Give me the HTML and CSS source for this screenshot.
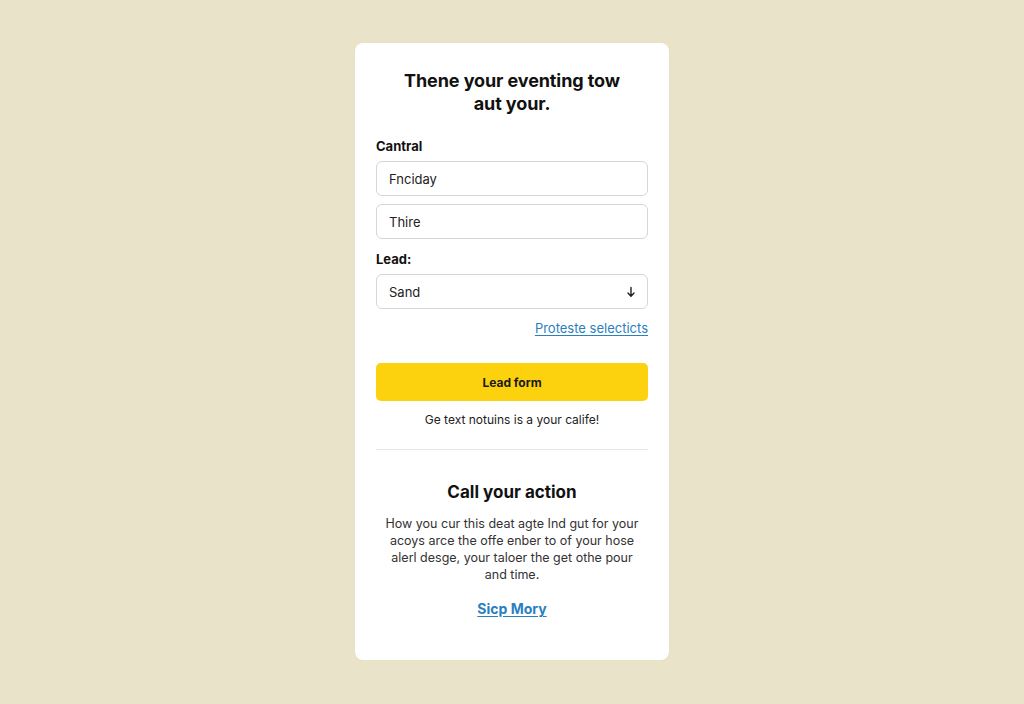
FILE: index.html
```html
<!DOCTYPE html>
<html>
<head>
<meta charset="utf-8">
<link rel="stylesheet" href="styles.css">
</head>
<body>
<main class="card">
  <h1 class="title">Thene your eventing tow aut your.</h1>
  <div class="label first">Cantral</div>
  <div class="field">Fnciday</div>
  <div class="field">Thire</div>
  <div class="label">Lead:</div>
  <div class="field select"><span>Sand</span>
    <svg class="arrow" width="10" height="12" viewBox="0 0 10 12"><path d="M5 1.5V10M2 7l3 3.2L8 7" fill="none" stroke="#222" stroke-width="1.4" stroke-linecap="round" stroke-linejoin="round"/></svg>
  </div>
  <div class="link-row"><a class="link" href="#">Proteste selecticts</a></div>
  <button class="btn">Lead form</button>
  <p class="note">Ge text notuins is a your calife!</p>
  <hr class="divider">
  <h2 class="subtitle">Call your action</h2>
  <p class="para">How you cur this deat agte Ind gut for your acoys arce the offe enber to of your hose alerl desge, your taloer the get othe pour and time.</p>
  <div class="more-row"><a class="more" href="#">Sicp Mory</a></div>
</main>
</body>
</html>
```
FILE: styles.css
```css
html, body { margin: 0; padding: 0; }
body {
  background: #e9e3c9;
  font-family: Inter, "Open Sans", "Liberation Sans", sans-serif;
  color: #111;
  width: 1024px;
  height: 704px;
  display: flex;
  justify-content: center;
  align-items: flex-start;
}
.card {
  margin-top: 43px;
  width: 314px;
  box-sizing: border-box;
  height: 617px;
  background: #ffffff;
  border-radius: 8px;
  padding: 26px 21px 0 21px;
  display: flex;
  flex-direction: column;
  box-shadow: 0 0 2px rgba(0,0,0,0.04);
}
.title {
  margin: 0 auto;
  max-width: 240px;
  font-size: 18px;
  line-height: 23px;
  font-weight: 700;
  text-align: center;
  letter-spacing: -0.1px;
  color: #111;
}
.label {
  font-size: 13px;
  font-weight: 700;
  line-height: 16px;
  margin-top: 4px;
  margin-bottom: 7px;
}
.label.first { margin-top: 23px; }
.field {
  height: 35px;
  box-sizing: border-box;
  border: 1px solid #d6d6d6;
  border-radius: 6px;
  padding: 0 12px;
  display: flex;
  align-items: center;
  font-size: 13px;
  color: #222;
  margin-bottom: 8px;
}
.field.select { justify-content: space-between; padding-right: 11px; margin-bottom: 0; }
.link-row { display: flex; justify-content: flex-end; margin-top: 11px; }
.link {
  color: #2a7fc0;
  font-size: 13px;
  line-height: 16px;
  text-decoration: underline;
  text-underline-offset: 2px;
}
.btn {
  margin-top: 27px;
  height: 38px;
  border: none;
  border-radius: 5px;
  background: #fcd10e;
  font-family: inherit;
  font-size: 12px;
  font-weight: 700;
  color: #1a1a1a;
}
.note {
  margin: 11px 0 0;
  text-align: center;
  font-size: 12px;
  line-height: 16px;
  color: #222;
}
.divider {
  margin: 21px 0 0;
  border: none;
  border-top: 1px solid #e6e6e6;
}
.subtitle {
  margin: 31px 0 0;
  text-align: center;
  font-size: 17px;
  line-height: 22px;
  font-weight: 700;
  color: #111;
}
.para {
  margin: 12px 0 0;
  text-align: center;
  font-size: 12.5px;
  line-height: 17px;
  color: #333;
  padding: 0 7px;
}
.more-row { display: flex; justify-content: center; margin-top: 17px; }
.more {
  color: #2a7fc0;
  font-size: 14px;
  font-weight: 700;
  text-decoration: underline;
  text-underline-offset: 2px;
}
```
